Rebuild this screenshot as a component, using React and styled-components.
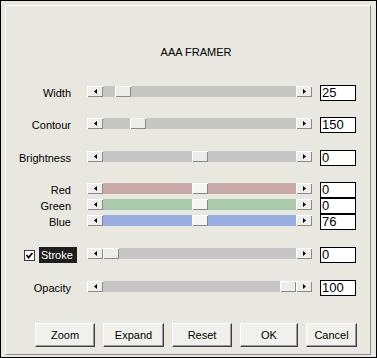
import React from 'react';
import styled, { createGlobalStyle } from 'styled-components';

const GlobalStyle = createGlobalStyle`
  html, body {
    margin: 0;
    padding: 0;
    background: #fff;
  }
  body {
    font-family: "Liberation Sans", Arial, sans-serif;
    color: #000;
  }
`;

const Frame = styled.div`
  width: 377px;
  height: 358px;
  box-sizing: border-box;
  border: 1px solid #000;
  background: #e8e7e0;
  padding: 4px 0 0 4px;
`;

const Panel = styled.div`
  width: 366px;
  height: 350px;
  box-sizing: border-box;
  border: 1px solid;
  border-color: #fff #8c8c8c #8c8c8c #fff;
  display: flex;
  flex-direction: column;
  padding-top: 40px;
`;

const Title = styled.div`
  height: 13px;
  line-height: 13px;
  font-size: 11px;
  text-align: center;
  padding-left: 16px;
`;

const Rows = styled.div`
  margin-top: 26px;
  display: flex;
  flex-direction: column;
`;

const Row = styled.div`
  display: flex;
  align-items: flex-start;
  height: 16px;
  margin-top: ${p => p.$gap}px;
`;

const Label = styled.div`
  width: 65px;
  flex-shrink: 0;
  margin-right: 16px;
  text-align: right;
  font-size: 11px;
  line-height: 16px;
`;

const StrokeCell = styled.div`
  width: 65px;
  flex-shrink: 0;
  margin-right: 16px;
  display: flex;
  align-items: center;
  height: 16px;
  padding-left: 18px;
  box-sizing: border-box;
  gap: 4px;
`;

const CheckBox = styled.div`
  width: 11px;
  height: 11px;
  flex-shrink: 0;
  box-sizing: border-box;
  border: 1px solid #3c3c3c;
  background: #fff;
  display: flex;
  align-items: center;
  justify-content: center;
`;

const Selected = styled.span`
  flex-shrink: 0;
  width: 38px;
  height: 16px;
  box-sizing: border-box;
  padding-left: 2px;
  background: #1e1e1e;
  color: #fff;
  font-size: 11px;
  line-height: 16px;
`;

const Slider = styled.div`
  width: 225px;
  height: 11px;
  margin-top: 1px;
  display: flex;
  flex-shrink: 0;
`;

const ArrowButton = styled.div`
  width: 16px;
  height: 11px;
  box-sizing: border-box;
  background: #ededea;
  box-shadow: inset 1px 1px #fff, inset -1px -1px #8a8a8a;
  display: flex;
  align-items: center;
  justify-content: center;
`;

const Track = styled.div`
  flex: 1;
  position: relative;
  background: ${p => p.$color};
`;

const Thumb = styled.div`
  position: absolute;
  top: 0;
  width: 16px;
  height: 11px;
  box-sizing: border-box;
  background: ${p => (p.$light ? '#f5f5f3' : '#ececea')};
  box-shadow: inset 1px 1px #fff, inset -1px -1px #8a8a8a;
`;

const ValueBox = styled.div`
  width: 36px;
  height: 16px;
  margin-left: 8px;
  flex-shrink: 0;
  box-sizing: border-box;
  border: 1px solid #000;
  background: #fff;
  padding-left: 1px;
  font-size: 13px;
  line-height: 14px;
`;

const ButtonBar = styled.div`
  margin-top: 27px;
  padding-left: 29px;
  display: flex;
  gap: 8px;
`;

const DialogButton = styled.div`
  width: ${p => p.$w}px;
  height: 24px;
  box-sizing: border-box;
  background: #f0f0ec;
  border: 1px solid;
  border-color: #fff #404040 #404040 #fff;
  box-shadow: inset -1px -1px #9a9a9a;
  display: flex;
  align-items: center;
  justify-content: center;
  font-size: 11px;
`;

const Arrow = ({ dir }) => (
  <svg width="3" height="5" viewBox="0 0 3 5">
    {dir === 'left'
      ? <polygon points="3,0 3,5 0,2.5" fill="#000" />
      : <polygon points="0,0 0,5 3,2.5" fill="#000" />}
  </svg>
);

const TRACK_W = 193 - 16;

const HSlider = ({ color, pos, light }) => (
  <Slider>
    <ArrowButton><Arrow dir="left" /></ArrowButton>
    <Track $color={color}>
      <Thumb $light={light} style={{ left: Math.round(pos * TRACK_W) }} />
    </Track>
    <ArrowButton><Arrow dir="right" /></ArrowButton>
  </Slider>
);

const rows = [
  { label: 'Width', value: '25', pos: 0.068, gap: 0, color: '#c6c6c6' },
  { label: 'Contour', value: '150', pos: 0.153, gap: 16, color: '#c6c6c6' },
  { label: 'Brightness', value: '0', pos: 0.5, gap: 17, color: '#c6c6c6' },
  { label: 'Red', value: '0', pos: 0.5, gap: 16, color: '#c9a9a9', light: true },
  { label: 'Green', value: '0', pos: 0.5, gap: 0, color: '#a9caab', light: true },
  { label: 'Blue', value: '76', pos: 0.5, gap: 0, color: '#98aee0', light: true },
];

const buttons = [
  { text: 'Zoom', w: 60 },
  { text: 'Expand', w: 61 },
  { text: 'Reset', w: 60 },
  { text: 'OK', w: 58 },
  { text: 'Cancel', w: 51 },
];

const App = () => (
  <>
    <GlobalStyle />
    <Frame>
      <Panel>
        <Title>AAA FRAMER</Title>
        <Rows>
          {rows.map(r => (
            <Row key={r.label} $gap={r.gap}>
              <Label>{r.label}</Label>
              <HSlider color={r.color} pos={r.pos} light={r.light} />
              <ValueBox>{r.value}</ValueBox>
            </Row>
          ))}
          <Row $gap={17}>
            <StrokeCell>
              <CheckBox>
                <svg width="7" height="7" viewBox="0 0 7 7">
                  <polyline points="0.5,3 2.5,5.5 6.5,1" fill="none" stroke="#000" strokeWidth="1.8" />
                </svg>
              </CheckBox>
              <Selected>Stroke</Selected>
            </StrokeCell>
            <HSlider color="#c6c6c6" pos={0} />
            <ValueBox>0</ValueBox>
          </Row>
          <Row $gap={17}>
            <Label>Opacity</Label>
            <HSlider color="#c6c6c6" pos={1} />
            <ValueBox>100</ValueBox>
          </Row>
        </Rows>
        <ButtonBar>
          {buttons.map(b => (
            <DialogButton key={b.text} $w={b.w}>{b.text}</DialogButton>
          ))}
        </ButtonBar>
      </Panel>
    </Frame>
  </>
);

export default App;
